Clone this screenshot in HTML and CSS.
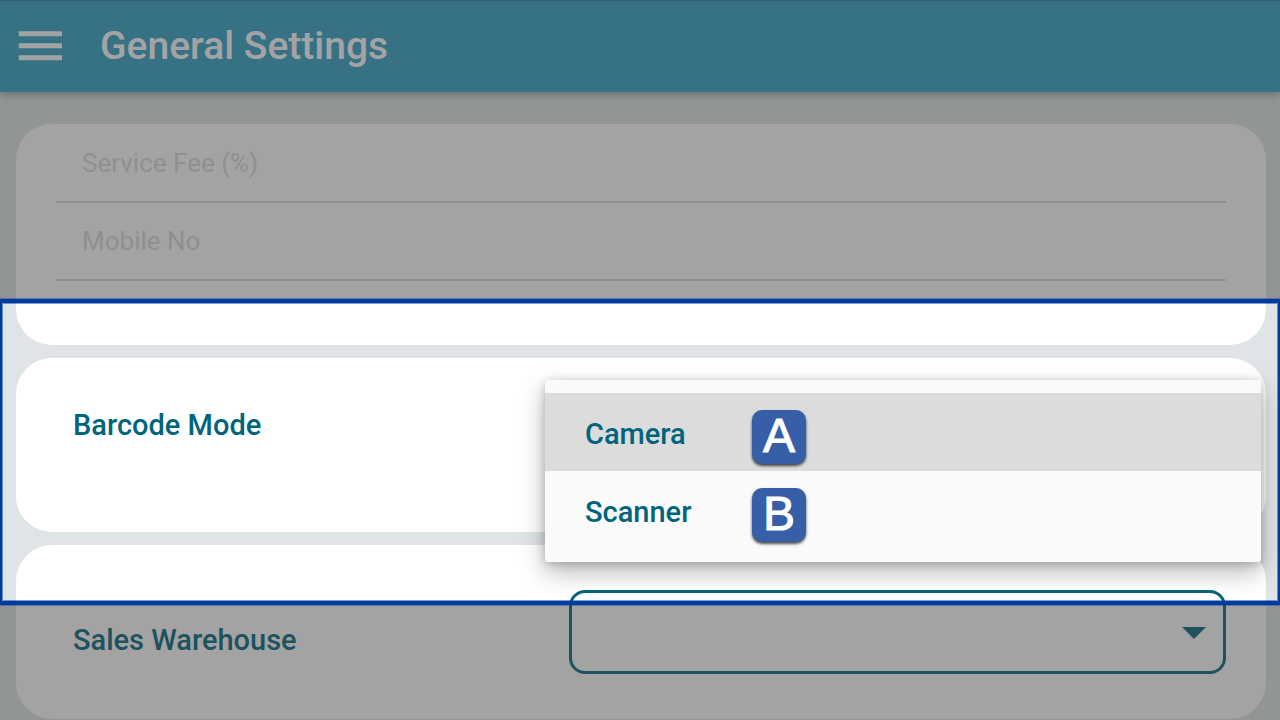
FILE: index.html
```html
<!DOCTYPE html>
<html lang="en">
<head>
<meta charset="utf-8">
<meta name="viewport" content="width=device-width, initial-scale=1">
<title>General Settings</title>
<link rel="stylesheet" href="styles.css">
</head>
<body>
<div class="screen">
  <header class="app-bar">
    <button class="menu-button" type="button" aria-label="Menu">
      <svg width="44" height="30" viewBox="0 0 44 30" aria-hidden="true"><path d="M.8 .3h43.2v5H.8zM.8 12.3h43.2v5H.8zM.8 24.2h43.2v5H.8z" fill="#fff"/></svg>
    </button>
    <h1 class="title">General Settings</h1>
  </header>

  <main class="content">
    <section class="card fields">
      <input class="field" type="text" placeholder="Service Fee (%)" aria-label="Service Fee (%)">
      <input class="field" type="text" placeholder="Mobile No" aria-label="Mobile No">
    </section>

    <section class="card setting">
      <span class="label" id="barcode-label">Barcode Mode</span>
      <div class="menu" role="listbox" aria-labelledby="barcode-label">
        <button class="option selected" type="button" role="option" aria-selected="true">Camera<span class="marker">A</span></button>
        <button class="option" type="button" role="option" aria-selected="false">Scanner<span class="marker">B</span></button>
      </div>
    </section>

    <section class="card setting warehouse">
      <label class="label" for="warehouse">Sales Warehouse</label>
      <div class="select-wrap">
        <select class="select" id="warehouse"><option value=""></option></select>
        <svg class="arrow" width="24" height="12" viewBox="0 0 24 12" aria-hidden="true"><path d="M0 0h24L12 12z" fill="#00657c"/></svg>
      </div>
    </section>
  </main>

  <div class="spotlight"></div>
</div>
</body>
</html>
```
FILE: styles.css
```css
* {
  box-sizing: border-box;
}

body {
  margin: 0;
  background: #dfe5e7;
  font-family: Roboto, "Liberation Sans", sans-serif;
}

button {
  border: 0;
  padding: 0;
  background: none;
  font: inherit;
}

.screen {
  position: relative;
  min-height: 100vh;
  overflow: hidden;
}

.app-bar {
  position: relative;
  display: flex;
  align-items: center;
  gap: 38px;
  height: 92px;
  padding: 0 18px 1px;
  border-top: 1px solid #2483a4;
  background: #33a0c4;
  box-shadow: 0 2px 8px rgba(0, 0, 0, 0.4);
}

.menu-button {
  display: flex;
}

.title {
  margin: 0;
  color: #fff;
  font-size: 39px;
  font-weight: 500;
  line-height: 48px;
}

.content {
  display: flex;
  flex-direction: column;
  gap: 13px;
  padding: 32px 14px 1px 16px;
}

.card {
  border-radius: 36px;
  background: #fff;
}

.fields {
  display: flex;
  flex-direction: column;
  padding: 1px 40px 64px;
}

.field {
  width: 100%;
  height: 78px;
  padding: 0 26px 1px;
  border: 0;
  border-bottom: 2px solid #dadada;
  border-radius: 0;
  background: none;
  color: #00657c;
  font: 400 26px/32px Roboto, "Liberation Sans", sans-serif;
}

.field::placeholder {
  color: #d9d9d9;
  opacity: 1;
}

.setting {
  position: relative;
  display: grid;
  grid-template-columns: 43% 1fr;
  align-items: start;
  min-height: 174px;
  padding: 49px 40px 44px 57px;
}

.label {
  color: #00657c;
  font-size: 29px;
  font-weight: 500;
  line-height: 36px;
}

.menu {
  position: absolute;
  z-index: 1;
  top: 22px;
  right: 5px;
  left: 529px;
  padding: 13px 0;
  border-radius: 3px;
  background: #fafafa;
  box-shadow: 0 10px 26px rgba(0, 0, 0, 0.28), 0 2px 10px rgba(0, 0, 0, 0.2);
}

.option {
  position: relative;
  display: block;
  width: 100%;
  height: 78px;
  padding: 3px 0 0 40px;
  color: #00657c;
  font-size: 29px;
  font-weight: 500;
  line-height: 36px;
  text-align: left;
}

.selected {
  background: #dcdcdc;
}

.marker {
  position: absolute;
  top: 17px;
  left: 207px;
  width: 54px;
  height: 54px;
  border-radius: 10px;
  background: #365fa8;
  box-shadow: 0 2px 3px rgba(0, 0, 0, 0.7);
  color: #fff;
  font: 400 48px/51px "Liberation Sans", sans-serif;
  text-align: center;
  -webkit-text-stroke: 1px #fff;
}

.warehouse {
  padding-top: 45px;
  padding-bottom: 45px;
}

.warehouse .label {
  align-self: center;
  padding-top: 16px;
}

.select-wrap {
  position: relative;
}

.select {
  display: block;
  width: 100%;
  height: 84px;
  padding: 0 60px 0 20px;
  border: 3px solid #00657c;
  border-radius: 16px;
  background: none;
  color: #00657c;
  font: 500 29px/36px Roboto, "Liberation Sans", sans-serif;
  appearance: none;
}

.arrow {
  position: absolute;
  top: 37px;
  right: 20px;
  pointer-events: none;
}

/* Highlighted band; everything outside it is dimmed by the spread shadow. */
.spotlight {
  position: absolute;
  z-index: 2;
  top: 299px;
  right: -2px;
  left: -2px;
  height: 306px;
  border: 4px solid #003ca0;
  box-shadow: inset 0 0 0 1px rgba(0, 60, 160, 0.5), 0 0 0 1px rgba(0, 60, 160, 0.4), 0 0 0 2000px rgba(61, 61, 61, 0.475);
  pointer-events: none;
}
```
